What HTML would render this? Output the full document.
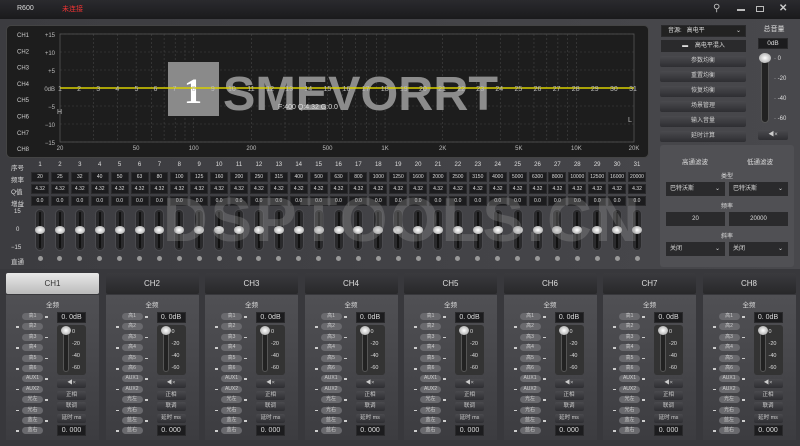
<!DOCTYPE html>
<html><head><meta charset="utf-8"><style>
*{box-sizing:border-box;margin:0;padding:0}
body{width:800px;height:446px;overflow:hidden;background:#38383c;font-family:"Liberation Sans","Noto Sans CJK SC",sans-serif;color:#ddd;position:relative;font-size:6px}
.a{position:absolute}
.btn{position:absolute;background:linear-gradient(#4a4a4e,#2e2e32);border-radius:2px;color:#ccc;text-align:center;font-size:6px}
.box{position:absolute;background:#1c1c1e;color:#ddd;text-align:center;border:1px solid #2a2a2c}
.lbl{position:absolute;font-size:6px;color:#ddd;text-align:center}
</style></head><body>
<div class="a" style="left:0;top:0;width:800px;height:19px;background:linear-gradient(#2a2a2e,#1a1a1c)"></div>
<div class="a" style="left:17px;top:5px;font-size:7px;color:#ddd">R600</div>
<div class="a" style="left:62px;top:4px;font-size:7px;color:#e33">未连接</div>
<div class="a" style="left:713px;top:3px;font-size:10px;color:#bbb">⚲</div>
<div class="a" style="left:737px;top:9px;width:8px;height:2px;background:#bbb"></div>
<div class="a" style="left:756px;top:6px;width:8px;height:6px;border:1px solid #bbb"></div>
<div class="a" style="left:779px;top:3px;font-size:10px;color:#ccc;font-weight:bold">✕</div>
<div class="a" style="left:0;top:19px;width:800px;height:250px;background:linear-gradient(90deg,#3c3c40,#48484c)"></div>
<div class="a" style="left:6px;top:25px;width:643px;height:133px;background:#1d1d1d;border-radius:5px;border:1px solid #444"></div>
<svg class="a" style="left:0;top:0" width="800" height="446" id="g"></svg>
<div id="c"></div>
<script>
var s='',h='';
var g=document.getElementById('g');
function X(f){return 60+574*Math.log10(f/20)/3}
for(var i=0;i<7;i++){var y=34+i*18;s+='<line x1="60" x2="634" y1="'+y+'" y2="'+y+'" stroke="#444" stroke-dasharray="2,2" stroke-width="0.6"/>';}
[30,40,50,60,70,80,90,100,200,300,400,500,600,700,800,900,1000,2000,3000,4000,5000,6000,7000,8000,9000,10000].forEach(function(f){var x=X(f);s+='<line x1="'+x+'" x2="'+x+'" y1="34" y2="142" stroke="#444" stroke-dasharray="2,2" stroke-width="0.6"/>'});
s+='<rect x="60" y="34" width="574" height="108" fill="none" stroke="#555" stroke-width="0.8"/>';
s+='<rect x="168" y="62" width="51" height="54" fill="#8a8a8a"/><text x="193" y="103" font-size="36" font-weight="bold" fill="#fff" text-anchor="middle" font-family="Liberation Serif">1</text>';
s+='<text x="223" y="110" font-size="48" font-weight="bold" fill="#8c8c8c" font-family="Liberation Sans" textLength="275" lengthAdjust="spacingAndGlyphs">SMEVORRT</text>';
s+='<line x1="60" x2="634" y1="88" y2="88" stroke="#d8d000" stroke-width="1.5"/>';
for(var i=1;i<=31;i++){var x=60+(i-1)*19.1;s+='<text x="'+x+'" y="91" font-size="7" fill="#bbb" text-anchor="middle">'+i+'</text>'}
s+='<text x="278" y="109" font-size="7" fill="#ddd">F:400 Q:4.32 G:0.0</text><text x="57" y="114" font-size="7" fill="#bbb">H</text><text x="628" y="122" font-size="7" fill="#bbb">L</text>';
var db=['+15','+10','+5','0dB','−5','−10','−15'];
for(var i=0;i<7;i++)s+='<text x="55" y="'+(37+i*18)+'" font-size="6" fill="#bbb" text-anchor="end">'+db[i]+'</text>';
for(var i=0;i<8;i++)s+='<text x="17" y="'+(37+i*16.3)+'" font-size="6" fill="#ccc">CH'+(i+1)+'</text>';
[[20,'20'],[50,'50'],[100,'100'],[200,'200'],[500,'500'],[1000,'1K'],[2000,'2K'],[5000,'5K'],[10000,'10K'],[20000,'20K']].forEach(function(p){s+='<text x="'+X(p[0])+'" y="150" font-size="6" fill="#bbb" text-anchor="middle">'+p[1]+'</text>'});
var fr=[20,25,32,40,50,63,80,100,125,160,200,250,315,400,500,630,800,1000,1250,1600,2000,2500,3150,4000,5000,6300,8000,10000,12500,16000,20000];
['序号','频率','Q值','增益'].forEach(function(t,k){h+='<div class="lbl" style="left:11px;top:'+(162+k*12)+'px;font-size:6.5px">'+t+'</div>'});
h+='<div class="lbl" style="left:14px;top:209px">15</div><div class="lbl" style="left:16px;top:227px">0</div><div class="lbl" style="left:11px;top:245px">−15</div><div class="lbl" style="left:11px;top:256px;font-size:6.5px">直通</div>';
for(var i=0;i<31;i++){var x=40+i*19.9;
h+='<div class="lbl" style="left:'+(x-9)+'px;width:18px;top:162px">'+(i+1)+'</div>';
h+='<div class="box" style="left:'+(x-9)+'px;width:18px;top:172px;height:10px;line-height:9px;font-size:5px">'+fr[i]+'</div>';
h+='<div class="box" style="left:'+(x-9)+'px;width:18px;top:184px;height:10px;line-height:9px;font-size:5px">4.32</div>';
h+='<div class="box" style="left:'+(x-9)+'px;width:18px;top:196px;height:10px;line-height:9px;font-size:5px">0.0</div>';
h+='<div class="a" style="left:'+(x-5)+'px;top:209px;width:10px;height:42px;background:#2a2a2c;border-radius:5px;border:1px solid #4a4a4e"></div>';
h+='<div class="a" style="left:'+(x-1)+'px;top:212px;width:2px;height:36px;background:#111"></div>';
h+='<div class="a" style="left:'+(x-5)+'px;top:226px;width:10px;height:8px;border-radius:50%;background:radial-gradient(#fff,#999)"></div>';
h+='<div class="a" style="left:'+(x-2.5)+'px;top:256px;width:5px;height:5px;border-radius:50%;background:#999"></div>';}
h+='<div class="a" style="left:163px;top:190px;font-size:62px;font-weight:bold;color:rgba(150,150,150,.32);letter-spacing:3px;line-height:62px">DSPTOOLS.CN</div>';
h+='<div class="box" style="left:661px;top:25px;width:85px;height:12px;text-align:left;padding-left:6px;line-height:11px;background:#222">音源:&nbsp;&nbsp;&nbsp;高电平<span style="float:right;margin-right:4px">⌄</span></div>';
h+='<div class="box" style="left:661px;top:40px;width:85px;height:12px;line-height:11px;background:#2a2a2c">▬&nbsp;&nbsp;&nbsp;&nbsp;高电平混入</div>';
['参数均衡','重置均衡','恢复均衡','场景管理','输入音量','延时计算'].forEach(function(t,k){h+='<div class="btn" style="left:660px;top:'+(56+k*15)+'px;width:86px;height:11px;line-height:11px">'+t+'</div>'});
h+='<div class="lbl" style="left:757px;top:24px;width:34px;font-size:7px">总音量</div>';
h+='<div class="box" style="left:758px;top:38px;width:30px;height:11px;line-height:10px;font-size:6.5px">0dB</div>';
h+='<div class="a" style="left:761px;top:54px;width:8px;height:69px;background:#222;border-radius:4px;border:1px solid #555"></div>';
h+='<div class="a" style="left:759px;top:53px;width:12px;height:10px;border-radius:50%;background:radial-gradient(#fff,#999)"></div>';
['0','-20','-40','-60'].forEach(function(t,k){h+='<div class="lbl" style="left:774px;top:'+(56+k*20)+'px">· '+t+'</div>'});
h+='<div class="btn" style="left:758px;top:130px;width:30px;height:10px;line-height:10px">◀×</div>';
h+='<div class="a" style="left:660px;top:145px;width:134px;height:122px;background:#505054;border-radius:3px"></div>';
h+='<div class="lbl" style="left:670px;top:156px;width:50px;font-size:6.5px">高通滤波</div><div class="lbl" style="left:735px;top:156px;width:50px;font-size:6.5px">低通滤波</div>';
h+='<div class="lbl" style="left:660px;top:171px;width:134px">类型</div><div class="lbl" style="left:660px;top:201px;width:134px">频率</div><div class="lbl" style="left:660px;top:231px;width:134px">斜率</div>';
function dd(x,y,t,arrow){h+='<div class="box" style="left:'+x+'px;top:'+y+'px;width:59px;height:14px;line-height:13px;background:#2a2a2c;'+(arrow?'text-align:left;padding-left:3px':'')+'">'+t+(arrow?'<span style="float:right;margin-right:4px">⌄</span>':'')+'</div>'}
dd(666,182,'巴特沃斯',1);dd(729,182,'巴特沃斯',1);dd(666,212,'20',0);dd(729,212,'20000',0);dd(666,242,'关闭',1);dd(729,242,'关闭',1);
var bl=['高1','高2','高3','高4','高5','高6','AUX1','AUX2','光左','光右','蓝左','蓝右'];
for(var c=0;c<8;c++){var L=6+c*99.5;
h+='<div class="a" style="left:'+L+'px;top:273px;width:93px;height:21px;background:'+(c==0?'linear-gradient(#e8e8e8,#bbb)':'linear-gradient(#3a3a3e,#28282a)')+';border-radius:2px;color:'+(c==0?'#333':'#ddd')+';font-size:8px;text-align:center;line-height:21px">CH'+(c+1)+'</div>';
h+='<div class="a" style="left:'+L+'px;top:295px;width:93px;height:145px;background:linear-gradient(#505054,#3c3c40)"></div>';
h+='<div class="lbl" style="left:'+L+'px;top:299px;width:93px;font-size:6.5px">全频</div>';
for(var k=0;k<12;k++){var y=313+k*10.4;h+='<div class="btn" style="left:'+(L+16)+'px;top:'+y+'px;width:21px;height:7px;line-height:7px;border-radius:4px;font-size:5px;background:#6a6a6e">'+bl[k]+'</div><div class="a" style="left:'+(L+(k%2?10:39))+'px;top:'+(y+3)+'px;width:3px;height:1.5px;background:#ccc"></div>';}
h+='<div class="box" style="left:'+(L+51)+'px;top:312px;width:29px;height:11px;line-height:10px;font-size:7px">0. 0dB</div>';
h+='<div class="a" style="left:'+(L+51)+'px;top:325px;width:29px;height:50px;background:#333;border-radius:3px"></div>';
h+='<div class="a" style="left:'+(L+57)+'px;top:328px;width:6px;height:44px;background:#222;border:1px solid #555;border-radius:3px"></div>';
h+='<div class="a" style="left:'+(L+55)+'px;top:326px;width:10px;height:9px;border-radius:50%;background:radial-gradient(#fff,#999)"></div>';
['0','-20','-40','-60'].forEach(function(t,k){h+='<div class="lbl" style="left:'+(L+66)+'px;top:'+(329+k*12)+'px;font-size:5.5px">'+t+'</div>'});
['◀×','正相','联调','延时 ms'].forEach(function(t,k){h+='<div class="btn" style="left:'+(L+51)+'px;top:'+(379+k*11.5)+'px;width:29px;height:9px;line-height:9px;font-size:5.5px">'+t+'</div>'});
h+='<div class="box" style="left:'+(L+51)+'px;top:425px;width:29px;height:11px;line-height:10px;font-size:7px">0. 000</div>';}
g.innerHTML=s;document.getElementById('c').innerHTML=h;
</script>
</body></html>
